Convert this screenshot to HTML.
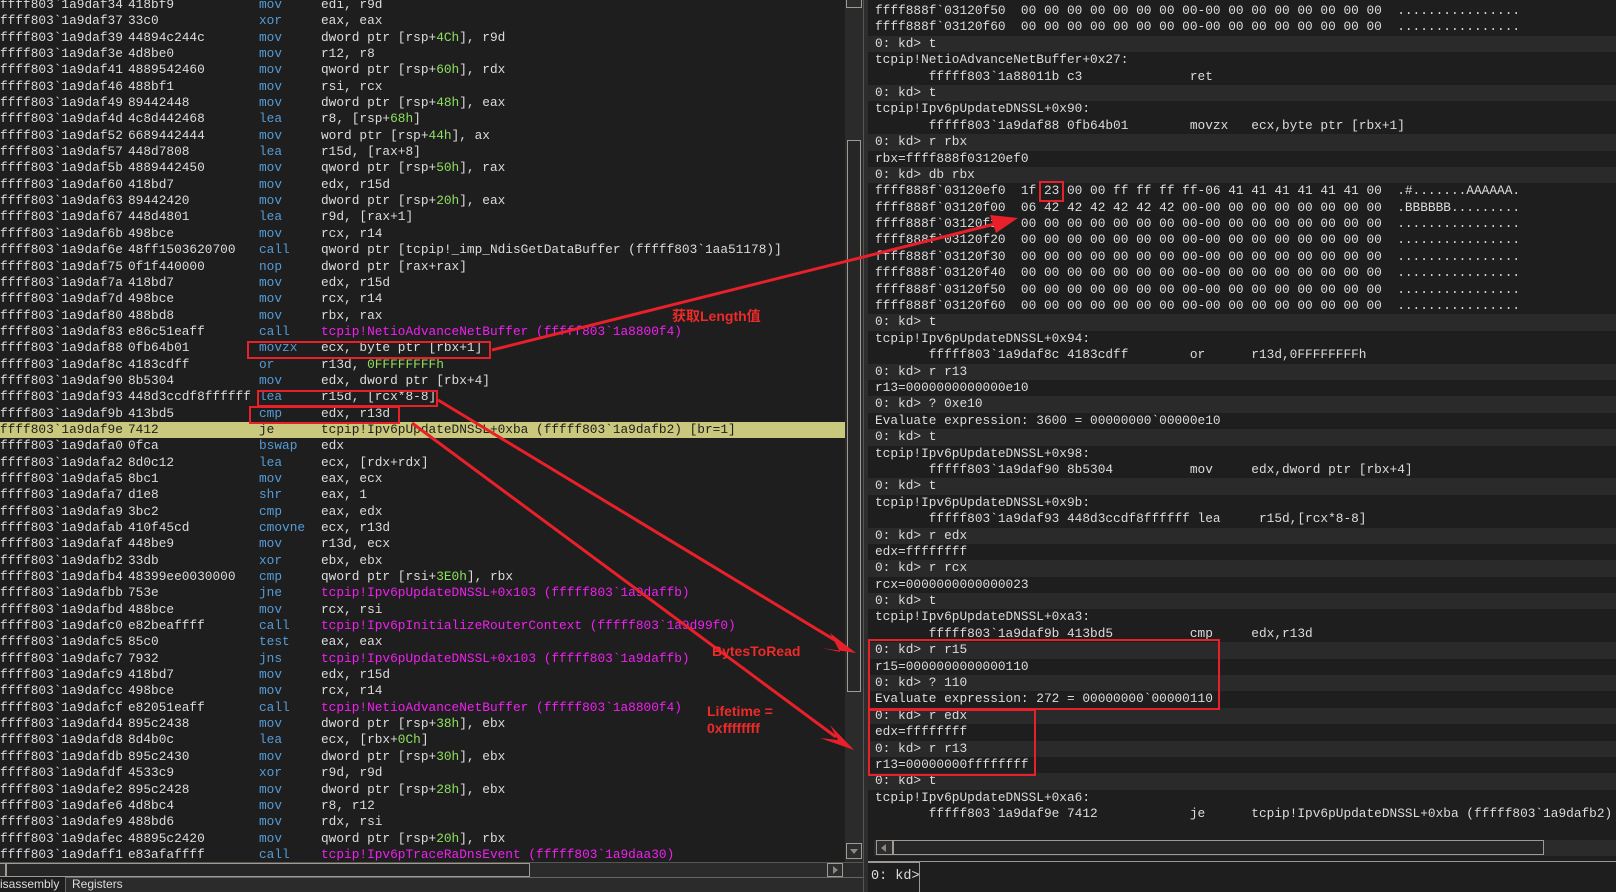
<!DOCTYPE html>
<html><head><meta charset="utf-8"><style>
*{margin:0;padding:0;box-sizing:border-box}
html,body{width:1616px;height:892px;overflow:hidden;background:#1e1e1e;font-family:"Liberation Mono","Noto Sans CJK SC",monospace;font-size:12.8px;color:#dcdcdc}
#L{position:absolute;left:0;top:0;width:845px;height:862px;overflow:hidden}
#Lc{position:absolute;left:0;top:-3px;width:845px}
#Lc div{height:16.35px;line-height:16.35px;white-space:pre}
#Lc span{display:inline-block}
.a{width:128px}.o{width:131px}.m{width:62px;color:#569cd6}
.g{color:#8ee060}.mg{color:#f020f0}
.hl{background:#c9c87d;color:#1e1e1e}.hl .m{color:#1e1e1e}
#R{position:absolute;left:868px;top:0;width:748px;height:840px;overflow:hidden}
#Rc{position:absolute;left:0;top:3px;width:748px}
#Rc div{height:16.4px;line-height:16.4px;white-space:pre;padding-left:7px}
#Rc div.p{background:#2a2a2a}
.vs{position:absolute;left:845px;top:0;width:18px;height:862px;background:#2b2b2b}
.box{position:absolute;border:1px solid #a09a90;background:#2d2d2d}
.lbl{position:absolute;color:#ee2a2a;font-family:"Liberation Sans","Noto Sans CJK SC",sans-serif;font-weight:bold;font-size:14px}
.rb{position:absolute;border:2px solid #e8202a}
</style></head><body>
<div id="L"><div id="Lc">
<div><span class="a">ffff803`1a9daf34</span><span class="o">418bf9</span><span class="m">mov</span>edi, r9d</div>
<div><span class="a">ffff803`1a9daf37</span><span class="o">33c0</span><span class="m">xor</span>eax, eax</div>
<div><span class="a">ffff803`1a9daf39</span><span class="o">44894c244c</span><span class="m">mov</span>dword ptr [rsp+<span class="g">4Ch</span>], r9d</div>
<div><span class="a">ffff803`1a9daf3e</span><span class="o">4d8be0</span><span class="m">mov</span>r12, r8</div>
<div><span class="a">ffff803`1a9daf41</span><span class="o">4889542460</span><span class="m">mov</span>qword ptr [rsp+<span class="g">60h</span>], rdx</div>
<div><span class="a">ffff803`1a9daf46</span><span class="o">488bf1</span><span class="m">mov</span>rsi, rcx</div>
<div><span class="a">ffff803`1a9daf49</span><span class="o">89442448</span><span class="m">mov</span>dword ptr [rsp+<span class="g">48h</span>], eax</div>
<div><span class="a">ffff803`1a9daf4d</span><span class="o">4c8d442468</span><span class="m">lea</span>r8, [rsp+<span class="g">68h</span>]</div>
<div><span class="a">ffff803`1a9daf52</span><span class="o">6689442444</span><span class="m">mov</span>word ptr [rsp+<span class="g">44h</span>], ax</div>
<div><span class="a">ffff803`1a9daf57</span><span class="o">448d7808</span><span class="m">lea</span>r15d, [rax+8]</div>
<div><span class="a">ffff803`1a9daf5b</span><span class="o">4889442450</span><span class="m">mov</span>qword ptr [rsp+<span class="g">50h</span>], rax</div>
<div><span class="a">ffff803`1a9daf60</span><span class="o">418bd7</span><span class="m">mov</span>edx, r15d</div>
<div><span class="a">ffff803`1a9daf63</span><span class="o">89442420</span><span class="m">mov</span>dword ptr [rsp+<span class="g">20h</span>], eax</div>
<div><span class="a">ffff803`1a9daf67</span><span class="o">448d4801</span><span class="m">lea</span>r9d, [rax+1]</div>
<div><span class="a">ffff803`1a9daf6b</span><span class="o">498bce</span><span class="m">mov</span>rcx, r14</div>
<div><span class="a">ffff803`1a9daf6e</span><span class="o">48ff1503620700</span><span class="m">call</span>qword ptr [tcpip!_imp_NdisGetDataBuffer (fffff803`1aa51178)]</div>
<div><span class="a">ffff803`1a9daf75</span><span class="o">0f1f440000</span><span class="m">nop</span>dword ptr [rax+rax]</div>
<div><span class="a">ffff803`1a9daf7a</span><span class="o">418bd7</span><span class="m">mov</span>edx, r15d</div>
<div><span class="a">ffff803`1a9daf7d</span><span class="o">498bce</span><span class="m">mov</span>rcx, r14</div>
<div><span class="a">ffff803`1a9daf80</span><span class="o">488bd8</span><span class="m">mov</span>rbx, rax</div>
<div><span class="a">ffff803`1a9daf83</span><span class="o">e86c51eaff</span><span class="m">call</span><span class="mg">tcpip!NetioAdvanceNetBuffer (fffff803`1a8800f4)</span></div>
<div><span class="a">ffff803`1a9daf88</span><span class="o">0fb64b01</span><span class="m">movzx</span>ecx, byte ptr [rbx+1]</div>
<div><span class="a">ffff803`1a9daf8c</span><span class="o">4183cdff</span><span class="m">or</span>r13d, <span class="g">0FFFFFFFFh</span></div>
<div><span class="a">ffff803`1a9daf90</span><span class="o">8b5304</span><span class="m">mov</span>edx, dword ptr [rbx+4]</div>
<div><span class="a">ffff803`1a9daf93</span><span class="o">448d3ccdf8ffffff</span><span class="m">lea</span>r15d, [rcx*8-8]</div>
<div><span class="a">ffff803`1a9daf9b</span><span class="o">413bd5</span><span class="m">cmp</span>edx, r13d</div>
<div class="hl"><span class="a">ffff803`1a9daf9e</span><span class="o">7412</span><span class="m">je</span>tcpip!Ipv6pUpdateDNSSL+0xba (fffff803`1a9dafb2) [br=1]                 </div>
<div><span class="a">ffff803`1a9dafa0</span><span class="o">0fca</span><span class="m">bswap</span>edx</div>
<div><span class="a">ffff803`1a9dafa2</span><span class="o">8d0c12</span><span class="m">lea</span>ecx, [rdx+rdx]</div>
<div><span class="a">ffff803`1a9dafa5</span><span class="o">8bc1</span><span class="m">mov</span>eax, ecx</div>
<div><span class="a">ffff803`1a9dafa7</span><span class="o">d1e8</span><span class="m">shr</span>eax, 1</div>
<div><span class="a">ffff803`1a9dafa9</span><span class="o">3bc2</span><span class="m">cmp</span>eax, edx</div>
<div><span class="a">ffff803`1a9dafab</span><span class="o">410f45cd</span><span class="m">cmovne</span>ecx, r13d</div>
<div><span class="a">ffff803`1a9dafaf</span><span class="o">448be9</span><span class="m">mov</span>r13d, ecx</div>
<div><span class="a">ffff803`1a9dafb2</span><span class="o">33db</span><span class="m">xor</span>ebx, ebx</div>
<div><span class="a">ffff803`1a9dafb4</span><span class="o">48399ee0030000</span><span class="m">cmp</span>qword ptr [rsi+<span class="g">3E0h</span>], rbx</div>
<div><span class="a">ffff803`1a9dafbb</span><span class="o">753e</span><span class="m">jne</span><span class="mg">tcpip!Ipv6pUpdateDNSSL+0x103 (fffff803`1a9daffb)</span></div>
<div><span class="a">ffff803`1a9dafbd</span><span class="o">488bce</span><span class="m">mov</span>rcx, rsi</div>
<div><span class="a">ffff803`1a9dafc0</span><span class="o">e82beaffff</span><span class="m">call</span><span class="mg">tcpip!Ipv6pInitializeRouterContext (fffff803`1a9d99f0)</span></div>
<div><span class="a">ffff803`1a9dafc5</span><span class="o">85c0</span><span class="m">test</span>eax, eax</div>
<div><span class="a">ffff803`1a9dafc7</span><span class="o">7932</span><span class="m">jns</span><span class="mg">tcpip!Ipv6pUpdateDNSSL+0x103 (fffff803`1a9daffb)</span></div>
<div><span class="a">ffff803`1a9dafc9</span><span class="o">418bd7</span><span class="m">mov</span>edx, r15d</div>
<div><span class="a">ffff803`1a9dafcc</span><span class="o">498bce</span><span class="m">mov</span>rcx, r14</div>
<div><span class="a">ffff803`1a9dafcf</span><span class="o">e82051eaff</span><span class="m">call</span><span class="mg">tcpip!NetioAdvanceNetBuffer (fffff803`1a8800f4)</span></div>
<div><span class="a">ffff803`1a9dafd4</span><span class="o">895c2438</span><span class="m">mov</span>dword ptr [rsp+<span class="g">38h</span>], ebx</div>
<div><span class="a">ffff803`1a9dafd8</span><span class="o">8d4b0c</span><span class="m">lea</span>ecx, [rbx+<span class="g">0Ch</span>]</div>
<div><span class="a">ffff803`1a9dafdb</span><span class="o">895c2430</span><span class="m">mov</span>dword ptr [rsp+<span class="g">30h</span>], ebx</div>
<div><span class="a">ffff803`1a9dafdf</span><span class="o">4533c9</span><span class="m">xor</span>r9d, r9d</div>
<div><span class="a">ffff803`1a9dafe2</span><span class="o">895c2428</span><span class="m">mov</span>dword ptr [rsp+<span class="g">28h</span>], ebx</div>
<div><span class="a">ffff803`1a9dafe6</span><span class="o">4d8bc4</span><span class="m">mov</span>r8, r12</div>
<div><span class="a">ffff803`1a9dafe9</span><span class="o">488bd6</span><span class="m">mov</span>rdx, rsi</div>
<div><span class="a">ffff803`1a9dafec</span><span class="o">48895c2420</span><span class="m">mov</span>qword ptr [rsp+<span class="g">20h</span>], rbx</div>
<div><span class="a">ffff803`1a9daff1</span><span class="o">e83afaffff</span><span class="m">call</span><span class="mg">tcpip!Ipv6pTraceRaDnsEvent (fffff803`1a9daa30)</span></div>
</div></div>
<!-- left scrollbars -->
<div class="vs"></div>
<div class="box" style="left:846px;top:-2px;width:16px;height:10px"></div>
<div class="box" style="left:847px;top:140px;width:14px;height:552px;background:#262626"></div>
<div class="box" style="left:846px;top:843px;width:16px;height:16px"></div>
<div style="position:absolute;left:850px;top:849px;border-left:4px solid transparent;border-right:4px solid transparent;border-top:5px solid #888"></div>
<div style="position:absolute;left:0;top:862px;width:863px;height:15px;background:#2b2b2b;border-top:1px solid #555"></div>
<div class="box" style="left:-2px;top:863px;width:8px;height:14px"></div>
<div class="box" style="left:6px;top:863px;width:524px;height:14px;background:#262626"></div>
<div class="box" style="left:827px;top:863px;width:16px;height:14px"></div>
<div style="position:absolute;left:833px;top:866px;border-top:4px solid transparent;border-bottom:4px solid transparent;border-left:5px solid #888"></div>
<div style="position:absolute;left:0;top:877px;width:864px;height:15px;background:#2b2b2b;border-top:1px solid #666"></div>
<div style="position:absolute;left:0;top:877px;width:66px;height:15px;background:#1e1e1e;border-right:1px solid #666;font-family:'Liberation Sans',sans-serif;font-size:12px;line-height:15px">isassembly</div>
<div style="position:absolute;left:72px;top:877px;font-family:'Liberation Sans',sans-serif;font-size:12px;line-height:15px">Registers</div>
<div style="position:absolute;left:863px;top:0;width:5px;height:892px;background:#2d2d2d;border-left:1px solid #555"></div>
<!-- right pane -->
<div id="R"><div id="Rc">
<div>ffff888f`03120f50  00 00 00 00 00 00 00 00-00 00 00 00 00 00 00 00  ................</div>
<div>ffff888f`03120f60  00 00 00 00 00 00 00 00-00 00 00 00 00 00 00 00  ................</div>
<div class="p">0: kd> t</div>
<div>tcpip!NetioAdvanceNetBuffer+0x27:</div>
<div>       fffff803`1a88011b c3              ret</div>
<div class="p">0: kd> t</div>
<div>tcpip!Ipv6pUpdateDNSSL+0x90:</div>
<div>       fffff803`1a9daf88 0fb64b01        movzx   ecx,byte ptr [rbx+1]</div>
<div class="p">0: kd> r rbx</div>
<div>rbx=ffff888f03120ef0</div>
<div class="p">0: kd> db rbx</div>
<div>ffff888f`03120ef0  1f 23 00 00 ff ff ff ff-06 41 41 41 41 41 41 00  .#.......AAAAAA.</div>
<div>ffff888f`03120f00  06 42 42 42 42 42 42 00-00 00 00 00 00 00 00 00  .BBBBBB.........</div>
<div>ffff888f`03120f10  00 00 00 00 00 00 00 00-00 00 00 00 00 00 00 00  ................</div>
<div>ffff888f`03120f20  00 00 00 00 00 00 00 00-00 00 00 00 00 00 00 00  ................</div>
<div>ffff888f`03120f30  00 00 00 00 00 00 00 00-00 00 00 00 00 00 00 00  ................</div>
<div>ffff888f`03120f40  00 00 00 00 00 00 00 00-00 00 00 00 00 00 00 00  ................</div>
<div>ffff888f`03120f50  00 00 00 00 00 00 00 00-00 00 00 00 00 00 00 00  ................</div>
<div>ffff888f`03120f60  00 00 00 00 00 00 00 00-00 00 00 00 00 00 00 00  ................</div>
<div class="p">0: kd> t</div>
<div>tcpip!Ipv6pUpdateDNSSL+0x94:</div>
<div>       fffff803`1a9daf8c 4183cdff        or      r13d,0FFFFFFFFh</div>
<div class="p">0: kd> r r13</div>
<div>r13=0000000000000e10</div>
<div class="p">0: kd> ? 0xe10</div>
<div>Evaluate expression: 3600 = 00000000`00000e10</div>
<div class="p">0: kd> t</div>
<div>tcpip!Ipv6pUpdateDNSSL+0x98:</div>
<div>       fffff803`1a9daf90 8b5304          mov     edx,dword ptr [rbx+4]</div>
<div class="p">0: kd> t</div>
<div>tcpip!Ipv6pUpdateDNSSL+0x9b:</div>
<div>       fffff803`1a9daf93 448d3ccdf8ffffff lea     r15d,[rcx*8-8]</div>
<div class="p">0: kd> r edx</div>
<div>edx=ffffffff</div>
<div class="p">0: kd> r rcx</div>
<div>rcx=0000000000000023</div>
<div class="p">0: kd> t</div>
<div>tcpip!Ipv6pUpdateDNSSL+0xa3:</div>
<div>       fffff803`1a9daf9b 413bd5          cmp     edx,r13d</div>
<div class="p">0: kd> r r15</div>
<div>r15=0000000000000110</div>
<div class="p">0: kd> ? 110</div>
<div>Evaluate expression: 272 = 00000000`00000110</div>
<div class="p">0: kd> r edx</div>
<div>edx=ffffffff</div>
<div class="p">0: kd> r r13</div>
<div>r13=00000000ffffffff</div>
<div class="p">0: kd> t</div>
<div>tcpip!Ipv6pUpdateDNSSL+0xa6:</div>
<div>       fffff803`1a9daf9e 7412            je      tcpip!Ipv6pUpdateDNSSL+0xba (fffff803`1a9dafb2)</div>
</div></div>
<!-- right h scrollbar -->
<div style="position:absolute;left:874px;top:840px;width:742px;height:16px;background:#2b2b2b"></div>
<div class="box" style="left:876px;top:840px;width:17px;height:15px"></div>
<div style="position:absolute;left:881px;top:844px;border-top:4px solid transparent;border-bottom:4px solid transparent;border-right:5px solid #888"></div>
<div class="box" style="left:893px;top:840px;width:651px;height:15px;background:#262626"></div>
<div style="position:absolute;left:868px;top:861px;width:748px;height:1px;background:#999"></div>
<div style="position:absolute;left:868px;top:862px;width:52px;height:30px;border-right:1px solid #999;border-top:1px solid #999;padding:6px 0 0 3px;white-space:pre;font-size:13.5px">0: kd&gt;</div>
<!-- red boxes -->
<div class="rb" style="left:1039px;top:181px;width:25px;height:21px"></div>
<div class="rb" style="left:247px;top:341px;width:244px;height:18px"></div>
<div class="rb" style="left:257px;top:390px;width:181px;height:17px"></div>
<div class="rb" style="left:249px;top:406px;width:151px;height:18px"></div>
<div class="rb" style="left:868px;top:639px;width:352px;height:71px"></div>
<div class="rb" style="left:868px;top:709px;width:168px;height:67px"></div>
<svg width="1616" height="892" style="position:absolute;left:0;top:0">
<g stroke="#e8202a" stroke-width="3" fill="#e8202a">
<line x1="492" y1="350" x2="995" y2="224"/>
<polygon points="1018,218 990,215 996,233" stroke="none"/>
<line x1="438" y1="400" x2="838" y2="642"/>
<polygon points="856,653 830,633 840,652 822,648" stroke="none"/>
<line x1="412" y1="423" x2="836" y2="737"/>
<polygon points="854,750 830,725 838,740 820,738" stroke="none"/>
</g></svg>
<div class="lbl" style="left:672px;top:306px">获取Length值</div>
<div class="lbl" style="left:712px;top:643px">BytesToRead</div>
<div class="lbl" style="left:707px;top:703px">Lifetime =</div>
<div class="lbl" style="left:707px;top:720px">0xffffffff</div>
</body></html>
